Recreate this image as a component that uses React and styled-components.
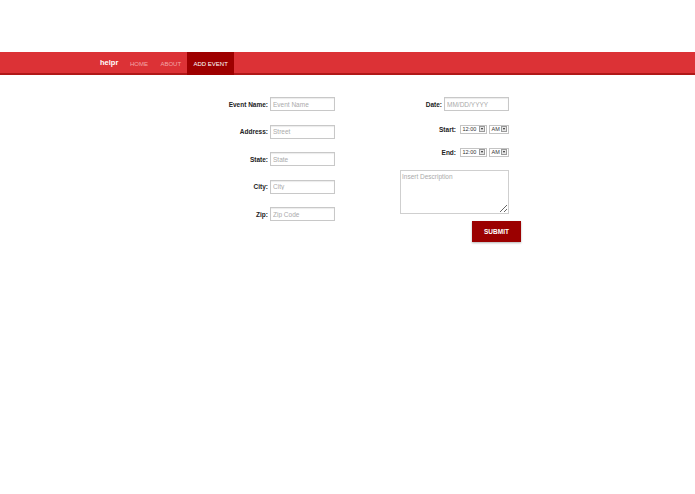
import React from "react";
import styled, { createGlobalStyle } from "styled-components";

const Global = createGlobalStyle`
  html, body { margin: 0; padding: 0; background: #fff; }
  body { font-family: "Liberation Sans", Arial, sans-serif; }
  * { box-sizing: border-box; }
`;

const Page = styled.div`
  padding-top: 52px;
  width: 695px;
  min-height: 494px;
`;

const NavBar = styled.nav`
  height: 23px;
  background: #dc3236;
  border-bottom: 2px solid #b01818;
  display: flex;
  align-items: stretch;
  padding-left: 100px;
`;

const Brand = styled.a`
  display: flex;
  align-items: center;
  color: #fff;
  font-weight: bold;
  font-size: 7.5px;
  margin-right: 5.5px;
`;

const NavLink = styled.a`
  display: flex;
  align-items: center;
  padding: 0 6.2px;
  font-size: 6px;
  color: ${(p) => (p.$active ? "#fff" : "#f4a6a8")};
  background: ${(p) => (p.$active ? "#9e0000" : "transparent")};
  margin-bottom: -2px;
  text-transform: uppercase;
`;

const FormArea = styled.div`
  display: flex;
  padding-top: 22px;
`;

const Column = styled.div`
  display: flex;
  flex-direction: column;
  align-items: flex-end;
  width: ${(p) => p.$width}px;
`;

const Row = styled.div`
  display: flex;
  align-items: center;
  justify-content: flex-end;
  height: 14px;
  margin-bottom: ${(p) => p.$gap}px;
  margin-right: ${(p) => p.$right || 0}px;
`;

const Label = styled.label`
  font-size: 6.5px;
  font-weight: bold;
  color: #222;
  margin-right: 2px;
`;

const Input = styled.input`
  width: 65px;
  height: 14px;
  border: 1px solid #c8c8c8;
  box-shadow: inset 0 1px 1px rgba(0, 0, 0, 0.08);
  font-family: "Liberation Sans", Arial, sans-serif;
  font-size: 6.5px;
  padding: 0 2px;
  outline: none;
  &::placeholder { color: #aaa; }
`;

const Select = styled.span`
  display: inline-flex;
  align-items: center;
  justify-content: space-between;
  width: ${(p) => p.$width}px;
  height: 9px;
  border: 1px solid #c4c4c4;
  font-size: 5.5px;
  color: #333;
  padding: 0 1px 0 1.5px;
  margin-left: 2px;
  background: #fff;
`;

const Arrow = styled.span`
  display: inline-flex;
  align-items: center;
  justify-content: center;
  width: 6px;
  height: 6px;
  border: 1px solid #9a9a9a;
  background: #e6e6e6;
  &::after {
    content: "";
    border-left: 1.5px solid transparent;
    border-right: 1.5px solid transparent;
    border-top: 2px solid #222;
  }
`;

const TextArea = styled.textarea`
  width: 109px;
  height: 44px;
  border: 1px solid #cfcfcf;
  font-family: "Liberation Sans", Arial, sans-serif;
  font-size: 6.5px;
  padding: 2px 1px;
  margin-right: 12px;
  margin-top: 9px;
  outline: none;
  &::placeholder { color: #aaa; }
`;

const Submit = styled.button`
  margin-top: 7px;
  width: 49px;
  height: 21px;
  background: #9b0000;
  border: none;
  color: #fff;
  font-weight: bold;
  font-size: 6.5px;
  font-family: "Liberation Sans", Arial, sans-serif;
  box-shadow: 0 1px 2px rgba(0,0,0,0.3);
`;

const TimeSelect = ({ value, width }) => (
  <Select $width={width}>
    {value}
    <Arrow />
  </Select>
);

export default function App() {
  return (
    <Page>
      <Global />
      <NavBar>
        <Brand>helpr</Brand>
        <NavLink>Home</NavLink>
        <NavLink>About</NavLink>
        <NavLink $active>Add Event</NavLink>
      </NavBar>
      <FormArea>
        <Column $width={335}>
          <Row $gap={13.5}><Label>Event Name:</Label><Input placeholder="Event Name" /></Row>
          <Row $gap={13.5}><Label>Address:</Label><Input placeholder="Street" /></Row>
          <Row $gap={13.5}><Label>State:</Label><Input placeholder="State" /></Row>
          <Row $gap={13.5}><Label>City:</Label><Input placeholder="City" /></Row>
          <Row $gap={13.5}><Label>Zip:</Label><Input placeholder="Zip Code" /></Row>
        </Column>
        <Column $width={186}>
          <Row $gap={11} $right={12}><Label>Date:</Label><Input placeholder="MM/DD/YYYY" /></Row>
          <Row $gap={9} $right={12}><Label>Start:</Label><TimeSelect value="12:00" width={27} /><TimeSelect value="AM" width={20} /></Row>
          <Row $gap={2} $right={12}><Label>End:</Label><TimeSelect value="12:00" width={27} /><TimeSelect value="AM" width={20} /></Row>
          <TextArea placeholder="Insert Description" />
          <Submit>SUBMIT</Submit>
        </Column>
      </FormArea>
    </Page>
  );
}
